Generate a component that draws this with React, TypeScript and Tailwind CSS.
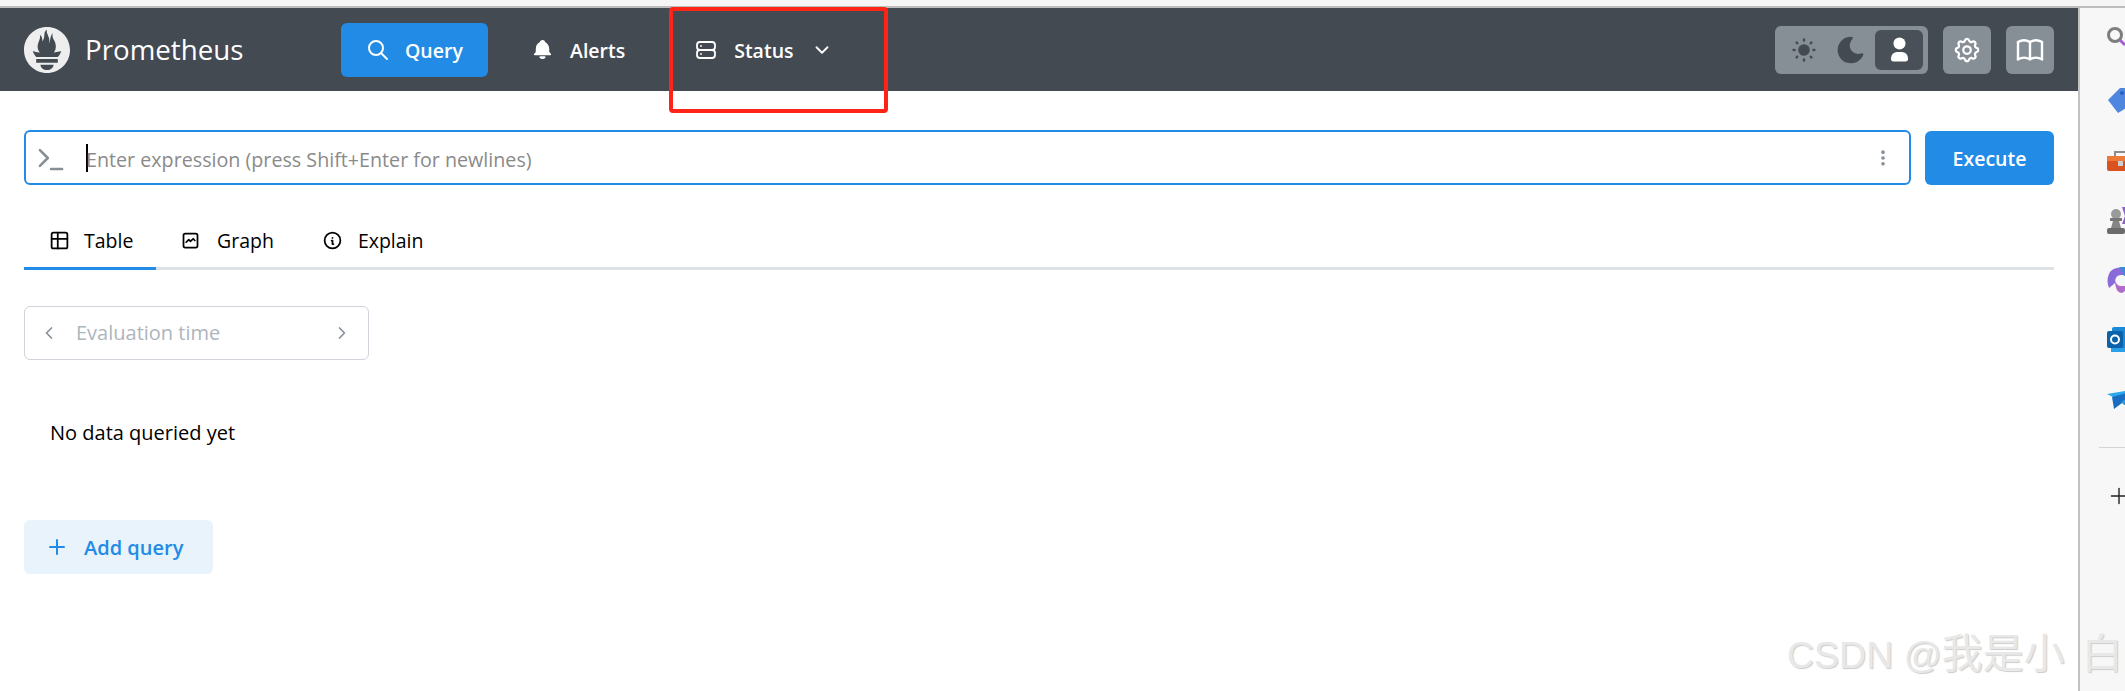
import React from "react";
import { SiPrometheus } from "react-icons/si";
import {
  TbSearch, TbBellFilled, TbServer, TbChevronDown, TbSunFilled, TbMoonFilled, TbUserFilled,
  TbSettings, TbBook, TbTerminal, TbDotsVertical, TbTable, TbGraph, TbInfoCircle, TbChevronLeft, TbChevronRight, TbPlus,
} from "react-icons/tb";

const font = { fontFamily: '"Open Sans", "Noto Sans CJK SC", sans-serif' };

function Sidebar() {
  return (
    <div className="w-[45px] shrink-0 bg-[#f7f7f7] overflow-hidden flex flex-col pt-[19px]">
      <div className="pl-[27px] flex flex-col">
        <svg width="24" height="20" viewBox="0 0 24 20" className="shrink-0">
          <circle cx="8" cy="8" r="6.5" fill="none" stroke="#7d7d7d" strokeWidth="3" />
          <path d="M13 13l5 5" stroke="#a35fd8" strokeWidth="3" />
        </svg>
        <svg width="24" height="25" viewBox="0 0 24 25" className="shrink-0 mt-[41px]">
          <path d="M1 12L13 0h11v17L11 25z" fill="#4f86e0" />
          <circle cx="15" cy="5" r="2" fill="#2c5fc0" />
        </svg>
        <svg width="24" height="21" viewBox="0 0 24 21" className="shrink-0 mt-[38px]">
          <path d="M8 5V1h12v4" fill="none" stroke="#8c8c8c" strokeWidth="2" />
          <rect x="0" y="5" width="24" height="15" rx="2" fill="#d9521f" />
          <rect x="0" y="5" width="24" height="5" fill="#ee7a3a" />
          <rect x="11" y="10" width="5" height="5" fill="#cfcfcf" />
        </svg>
        <svg width="24" height="28" viewBox="0 0 24 28" className="shrink-0 mt-[35px]">
          <circle cx="9" cy="7" r="5" fill="#9a9a9a" />
          <rect x="3" y="11" width="12" height="3" fill="#777" />
          <path d="M6 14h6l2 7H4z" fill="#858585" />
          <rect x="0" y="21" width="18" height="6" rx="2" fill="#6b6b6b" />
          <path d="M15 0h5v17h-5l3-8z" fill="#8a62d0" />
        </svg>
        <svg width="24" height="27" viewBox="0 0 24 27" className="shrink-0 mt-[32px]">
          <path d="M2 7C4 2 10 0 14 1L18 8H14C9 8 8 12 8 16L2 21C0 16 0 11 2 7z" fill="#8a6ad8" />
          <path d="M8 13C8 22 11 26 15 26L18 24V19H14C11 19 9 17 8 13z" fill="#b06cc8" />
          <path d="M12 0H24V9H17C16 5 15 3 12 0z" fill="#2f8fd8" />
        </svg>
        <svg width="24" height="25" viewBox="0 0 24 25" className="shrink-0 mt-[33px]">
          <rect x="5" y="0" width="19" height="21" rx="2" fill="#1b8ad6" />
          <rect x="0" y="4" width="16" height="17" rx="2" fill="#0b62a8" />
          <rect x="4" y="21" width="20" height="4" fill="#2aa0e8" />
          <circle cx="8" cy="12.5" r="4" fill="none" stroke="#fff" strokeWidth="2" />
        </svg>
        <svg width="24" height="20" viewBox="0 0 24 20" className="shrink-0 mt-[38px]">
          <path d="M0 4L24 0v8L8 8z" fill="#2aa8ee" />
          <path d="M5 7L24 2v18L15 13L7 19z" fill="#1a6cc0" />
          <path d="M14 12L24 6v14z" fill="#2d9be6" />
        </svg>
      </div>
      <div className="h-px bg-[#d4d4d4] ml-[19px] mt-[37px] shrink-0" />
      <TbPlus className="shrink-0 ml-[26px] mt-[35px] text-[#222] w-[26px] h-[26px]" strokeWidth={1.3} />
    </div>
  );
}

export default function App() {
  return (
    <div className="relative w-[2125px] h-[691px] overflow-hidden bg-white text-black flex flex-col" style={font}>
      <div className="h-[6px] bg-[#f5f5f5] shrink-0" />
      <div className="h-[2px] bg-[#bdbdbd] shrink-0" />
      <div className="flex flex-1 min-h-0">
        <main className="w-[2080px] shrink-0 border-r-2 border-[#c2c2c2] flex flex-col">
          <header className="h-[83px] bg-[#434a52] shrink-0 flex items-center pl-6 pr-6 text-white">
            <SiPrometheus className="w-[46px] h-[46px] text-[#eeeeee] shrink-0" />
            <span className="ml-[15px] text-[27.7px] leading-none w-[256px] pt-[1px]">Prometheus</span>
            <div className="h-[54px] w-[147px] rounded-md bg-[#228be6] flex items-center pl-[25px] text-[19.5px] font-semibold">
              <TbSearch className="w-[24px] h-[24px]" strokeWidth={2} />
              <span className="ml-[15px] pt-[2px]">Query</span>
            </div>
            <div className="flex items-center ml-[43px] text-[19.5px] font-semibold">
              <TbBellFilled className="w-[23px] h-[23px]" />
              <span className="ml-[16px] pt-[2px]">Alerts</span>
            </div>
            <div className="flex items-center ml-[69px] text-[19.5px] font-semibold">
              <TbServer className="w-[24px] h-[24px]" strokeWidth={1.8} />
              <span className="ml-[16px] pt-[2px]">Status</span>
              <TbChevronDown className="ml-[17px] w-[22px] h-[22px]" />
            </div>
            <div className="ml-auto flex items-center gap-[15px]">
              <div className="w-[153px] h-[48px] rounded-md bg-[#868e96] flex items-center pl-[15px] pr-[5px] text-[#434a52]">
                <TbSunFilled className="w-[28px] h-[28px]" />
                <TbMoonFilled className="w-[32px] h-[32px] ml-[17px]" />
                <div className="ml-auto w-[48px] h-[40px] rounded-md bg-[#495057] flex items-center justify-center text-white">
                  <TbUserFilled className="w-[29px] h-[29px]" />
                </div>
              </div>
              <div className="w-[48px] h-[48px] rounded-md bg-[#868e96] flex items-center justify-center">
                <TbSettings className="w-[30px] h-[30px]" strokeWidth={1.8} />
              </div>
              <div className="w-[48px] h-[48px] rounded-md bg-[#868e96] flex items-center justify-center">
                <TbBook className="w-[32px] h-[32px]" strokeWidth={1.8} />
              </div>
            </div>
          </header>
          <div className="flex-1 pl-6 pr-6 pt-[39px]">
            <div className="flex items-center gap-[14px]">
              <div className="flex-1 h-[55px] rounded-md border-2 border-[#228be6] flex items-center pl-[6px] pr-[16px]">
                <TbTerminal className="w-[38px] h-[38px] text-[#868e96] shrink-0" strokeWidth={1.6} />
                <div className="ml-[16px] w-[2px] h-[28px] bg-black" />
                <span className="text-[19.7px] text-[#8a8a8a] -ml-[2px] pt-[5px]">Enter expression (press Shift+Enter for newlines)</span>
                <TbDotsVertical className="ml-auto w-[20px] h-[20px] text-[#868e96]" strokeWidth={2.4} />
              </div>
              <div className="w-[129px] h-[54px] rounded-md bg-[#228be6] text-white text-[19.5px] font-semibold flex items-center justify-center pt-[2px]">Execute</div>
            </div>
            <div className="flex mt-[29px] h-[56px] border-b-[3px] border-[#dee2e6] text-[19.5px]">
              <div className="w-[132px] h-[56px] border-b-[3px] border-[#228be6] flex items-center pl-[25px] shrink-0">
                <TbTable className="w-[21px] h-[21px]" strokeWidth={2} />
                <span className="ml-[14px] pt-[1px]">Table</span>
              </div>
              <div className="flex items-center pl-[24px] h-[53px]">
                <TbGraph className="w-[21px] h-[21px]" strokeWidth={2} />
                <span className="ml-[16px] pt-[1px]">Graph</span>
              </div>
              <div className="flex items-center pl-[48px] h-[53px]">
                <TbInfoCircle className="w-[21px] h-[21px]" strokeWidth={2} />
                <span className="ml-[15px] pt-[1px]">Explain</span>
              </div>
            </div>
            <div className="mt-[36px] w-[345px] h-[54px] rounded-md border border-[#ced4da] flex items-center pl-[14px] pr-[16px] text-[#adb5bd] text-[20px]">
              <TbChevronLeft className="w-[20px] h-[20px] text-[#868e96]" />
              <span className="ml-[17px]">Evaluation time</span>
              <TbChevronRight className="ml-auto w-[20px] h-[20px] text-[#868e96]" />
            </div>
            <div className="mt-[58px] pl-[26px] text-[20px] leading-[30px]">No data queried yet</div>
            <div className="mt-[72px] w-[189px] h-[54px] rounded-md bg-[#e8f3fc] text-[#228be6] text-[20px] font-semibold flex items-center pl-[21px]">
              <TbPlus className="w-[24px] h-[24px]" strokeWidth={2} />
              <span className="ml-[15px] pt-[2px]">Add query</span>
            </div>
          </div>
        </main>
        <Sidebar />
      </div>
      <div className="absolute left-[669px] top-[7px] w-[219px] h-[106px] border-4 border-[#ff2418] rounded-[4px]" />
      <div className="absolute left-[1787px] top-[626px] whitespace-nowrap text-[37.5px] leading-[56px] text-[#e8e8e8] [text-shadow:1px_1px_1px_#cccccc]" style={{ fontFamily: '"Liberation Sans", "Noto Sans CJK SC", sans-serif' }}>
        CSDN @<span className="text-[41px]">我是小</span><span className="ml-[17px] text-[41px]">白</span>
      </div>
    </div>
  );
}
